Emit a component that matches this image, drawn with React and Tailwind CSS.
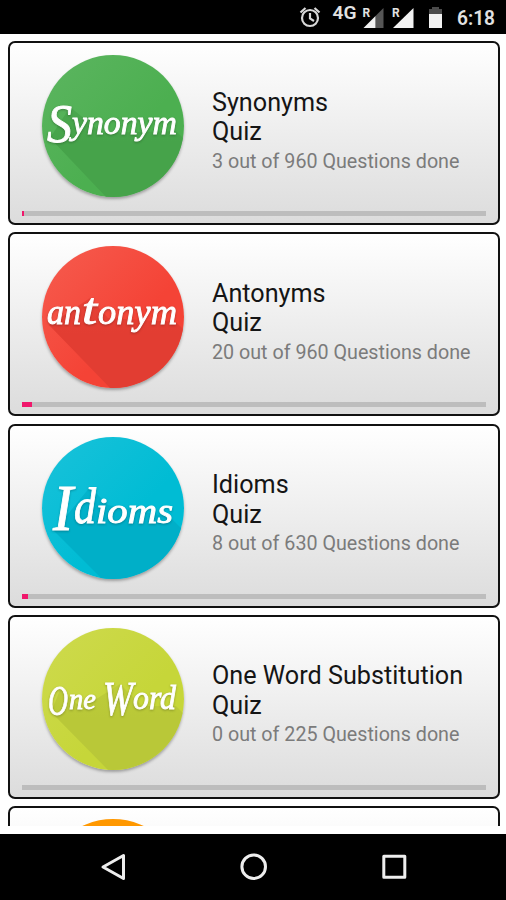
// Quiz category list. Each row is a card with a round badge, the quiz name
// and a thin progress bar; the phone's status and navigation bars frame it.

const quizzes = [
  {
    id: "synonyms",
    title: "Synonyms",
    done: 3,
    total: 960,
    bar: 2,
    from: "#5cb560",
    to: "#4caf50",
    shade: "#46a34a",
    shadow: "M8 83 L28 52 L60 78 L134 76 L142 84 L142 142 L64 142 Z",
    letters: [
      { run: "S", x: 5, y: 87, size: 54, width: 25 },
      { run: "ynonym", x: 30, y: 79, size: 34, width: 105 },
    ],
  },
  {
    id: "antonyms",
    title: "Antonyms",
    done: 20,
    total: 960,
    bar: 9.5,
    from: "#f65c4f",
    to: "#f44336",
    shade: "#e23d32",
    shadow: "M7 79 L48 52 L66 72 L134 76 L142 84 L142 142 L68 142 Z",
    letters: [
      { run: "an", x: 5, y: 78, size: 36, width: 34 },
      { run: "t", x: 40, y: 78, size: 45, width: 15 },
      { run: "onym", x: 56, y: 78, size: 36, width: 79 },
    ],
  },
  {
    id: "idioms",
    title: "Idioms",
    done: 8,
    total: 630,
    bar: 6,
    from: "#1ac2da",
    to: "#00bcd4",
    shade: "#00afc8",
    shadow: "M12 94 L48 50 L66 68 L128 80 L142 94 L142 142 L60 142 Z",
    letters: [
      { run: "I", x: 11, y: 93, size: 65, width: 20 },
      { run: "d", x: 32, y: 86, size: 50, width: 22 },
      { run: "ioms", x: 54, y: 86, size: 35, width: 77 },
    ],
  },
  {
    id: "one-word",
    title: "One Word Substitution",
    done: 0,
    total: 225,
    bar: 0,
    from: "#ceda4e",
    to: "#c6d639",
    shade: "#b9c838",
    shadow: "M9 84 L18 62 L40 80 L78 56 L100 78 L134 78 L142 86 L142 142 L66 142 Z",
    letters: [
      { run: "O", x: 6, y: 87, size: 43, width: 20 },
      { run: "ne ", x: 27, y: 81, size: 30, width: 34 },
      { run: "W", x: 61, y: 87, size: 48, width: 30 },
      { run: "ord", x: 91, y: 81, size: 34, width: 43 },
    ],
  },
];

function Badge({ quiz }) {
  const { id, letters, from, to, shade, shadow } = quiz;
  return (
    <svg
      viewBox="0 0 142 142"
      className="size-[142px] shrink-0 overflow-visible rounded-full shadow-[0_2px_3px_rgba(0,0,0,0.3)]"
    >
      <defs>
        <linearGradient id={`${id}-fill`} x1="0" y1="0" x2="1" y2="1">
          <stop offset="0" stopColor={from} />
          <stop offset="0.6" stopColor={to} />
        </linearGradient>
        <linearGradient id={`${id}-shade`} x1="0" y1="0" x2="0" y2="1">
          <stop offset="0" stopColor={shade} stopOpacity="0.7" />
          <stop offset="0.4" stopColor={shade} />
        </linearGradient>
        <clipPath id={`${id}-clip`}>
          <circle cx="71" cy="71" r="71" />
        </clipPath>
      </defs>
      <g clipPath={`url(#${id}-clip)`}>
        <rect width="142" height="142" fill={`url(#${id}-fill)`} />
        <path d={shadow} fill={`url(#${id}-shade)`} />
      </g>
      <text className="fill-white stroke-white stroke-[0.9] font-['Liberation_Serif',serif] italic drop-shadow-[0_1px_1px_rgba(0,0,0,0.25)]">
        {letters.map(({ run, x, y, size, width }) => (
          <tspan
            key={x}
            x={x}
            y={y}
            fontSize={size}
            textLength={width}
            lengthAdjust="spacingAndGlyphs"
          >
            {run}
          </tspan>
        ))}
      </text>
    </svg>
  );
}

function QuizCard({ quiz }) {
  return (
    <article className="h-[184px] shrink-0 rounded-[7px] border-2 border-[#111] bg-linear-to-b from-white to-[#dcdcdc] px-3 pt-[11.5px]">
      <div className="flex pl-5">
        <Badge quiz={quiz} />
        <div className="pl-7 pt-[33px] whitespace-nowrap">
          <h2 className="text-[25.2px] leading-[29.5px] text-[#151515]">
            {quiz.title}
            <br />
            Quiz
          </h2>
          <p className="mt-[3px] text-[19.7px] leading-6 text-[#7b7b7b]">
            {quiz.done} out of {quiz.total} Questions done
          </p>
        </div>
      </div>
      <div className="mt-[14.5px] h-[5px] bg-[#bdbdbd]">
        <div className="h-full bg-[#f0186c]" style={{ width: quiz.bar }} />
      </div>
    </article>
  );
}

function StatusBar() {
  return (
    <header className="h-[34px] shrink-0 bg-black">
      <svg viewBox="0 0 506 34" className="h-[34px] w-[506px]">
        <g fill="none" stroke="#d8d8d8" strokeWidth="2.2">
          <circle cx="310" cy="18" r="8" />
          <path d="M310 13v5.5l4 2.5M300.5 12.5l5-4.5M319.5 12.5l-5-4.5" />
        </g>
        <g className="font-[Roboto,sans-serif]" fill="#e2e2e2">
          <text
            x="332.5"
            y="19"
            fontSize="18"
            fontWeight="600"
            textLength="24"
            lengthAdjust="spacingAndGlyphs"
          >
            4G
          </text>
          <text x="362.5" y="17" fontSize="12" fontWeight="700">
            R
          </text>
          <text x="392" y="17" fontSize="12" fontWeight="700">
            R
          </text>
          <text
            x="457"
            y="25"
            fontSize="20"
            fontWeight="600"
            textLength="38"
            lengthAdjust="spacingAndGlyphs"
          >
            6:18
          </text>
        </g>
        <path d="M383.5 8v20h-8v-12z" fill="#565656" />
        <path d="M375.5 16v12h-12z" fill="#f2f2f2" />
        <path d="M413.5 8v20h-20.5z" fill="#f2f2f2" />
        <path d="M429 9h3V7h7v2h3v5h-13z" fill="#4b4b4b" />
        <path d="M429 14h13v14h-13z" fill="#f2f2f2" />
      </svg>
    </header>
  );
}

function NavBar() {
  return (
    <nav className="h-[66px] shrink-0 bg-black">
      <svg
        viewBox="0 0 506 66"
        className="h-[66px] w-[506px]"
        fill="none"
        stroke="#eeeeee"
        strokeWidth="3"
        strokeLinejoin="round"
      >
        <path d="M123.5 21.5v23L103 33z" />
        <circle cx="253.7" cy="32.7" r="11.8" />
        <rect x="383.8" y="22.3" width="21" height="21" />
      </svg>
    </nav>
  );
}

function App() {
  return (
    <main className="flex h-[900px] w-[506px] flex-col overflow-hidden bg-white font-[Roboto,sans-serif]">
      <StatusBar />
      <section className="mb-2 flex min-h-0 flex-1 flex-col gap-[7.3px] overflow-hidden pt-[7px] pr-[6px] pl-2">
        {quizzes.map((quiz) => (
          <QuizCard key={quiz.id} quiz={quiz} />
        ))}
        <article className="h-[184px] shrink-0 rounded-[7px] border-2 border-[#111] bg-linear-to-b from-white to-[#dcdcdc] px-3 pt-[11px]">
          <div className="ml-5 size-[142px] rounded-full bg-[#ff9800]" />
        </article>
      </section>
      <NavBar />
    </main>
  );
}

export default App;
